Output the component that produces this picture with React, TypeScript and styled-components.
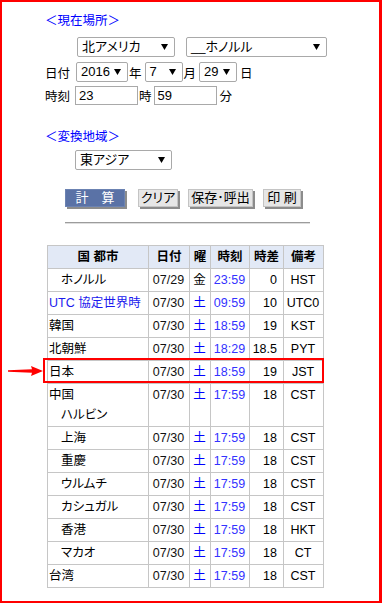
import React from "react";
import styled, { createGlobalStyle } from "styled-components";

const Global = createGlobalStyle`
  html, body { margin: 0; padding: 0; background: #fff; }
  body {
    font-family: "Liberation Sans", "Noto Sans CJK JP", sans-serif;
    font-size: 12.5px;
    color: #000;
    font-feature-settings: "palt";
  }
`;

const Frame = styled.div`
  box-sizing: border-box;
  width: 382px;
  height: 603px;
  border: 2px solid #f00;
  border-right-width: 3px;
  padding: 11px 0 0 43px;
  display: flex;
  flex-direction: column;
  align-items: flex-start;
`;

const Title = styled.div<{ $mt?: number }>`
  color: #0000ff;
  font-size: 12.5px;
  line-height: 16px;
  height: 16px;
  font-feature-settings: normal;
  margin-top: ${(p) => p.$mt ?? 0}px;
`;

const Row = styled.div<{ $mt: number; $pl?: number; $h: number; $gap?: number }>`
  display: flex;
  align-items: center;
  margin-top: ${(p) => p.$mt}px;
  padding-left: ${(p) => p.$pl ?? 0}px;
  height: ${(p) => p.$h}px;
  gap: ${(p) => p.$gap ?? 0}px;
`;

const SelectBox = styled.div<{ $w: number; $ml?: number }>`
  box-sizing: border-box;
  width: ${(p) => p.$w}px;
  height: 20px;
  margin-left: ${(p) => p.$ml ?? 0}px;
  border: 1px solid #a9a9a9;
  border-radius: 2px;
  background: #fff;
  display: flex;
  align-items: center;
  justify-content: space-between;
  padding: 0 6px 0 4px;
  font-size: 13px;
  line-height: 18px;
  white-space: nowrap;
`;

const Label = styled.span<{ $ml?: number; $mr?: number }>`
  font-size: 12.5px;
  margin-left: ${(p) => p.$ml ?? 0}px;
  margin-right: ${(p) => p.$mr ?? 0}px;
  white-space: nowrap;
`;

const TextInput = styled.div<{ $ml?: number }>`
  box-sizing: border-box;
  width: 63px;
  height: 19px;
  margin-left: ${(p) => p.$ml ?? 0}px;
  border: 1px solid #a9a9a9;
  padding-left: 3px;
  font-size: 13px;
  line-height: 17px;
  background: #fff;
`;

const Button = styled.div<{ $primary?: boolean; $w: number; $ml?: number }>`
  box-sizing: border-box;
  width: ${(p) => p.$w}px;
  height: 18px;
  margin-left: ${(p) => p.$ml ?? 0}px;
  background: ${(p) => (p.$primary ? "#5a72a6" : "#e6e6e6")};
  color: ${(p) => (p.$primary ? "#fff" : "#000")};
  border: 1px solid ${(p) => (p.$primary ? "#6b82b2" : "#c4c4c4")};
  box-shadow: 2px 2px 0 #8c8c8c;
  display: flex;
  align-items: center;
  justify-content: center;
  font-size: 13px;
  line-height: 16px;
  white-space: pre;
`;

const Rule = styled.div`
  margin-top: 15px;
  margin-left: 20px;
  width: 245px;
  border-top: 1px solid #9c9c9c;
  border-bottom: 1px solid #dedede;
`;

const TableWrap = styled.div`
  position: relative;
  margin-top: 21px;
  margin-left: 2px;
`;

const Table = styled.table`
  border-collapse: collapse;
  table-layout: fixed;
  width: 277px;
  font-size: 12.5px;
`;

const Th = styled.th`
  background: #e2e9f6;
  border: 1px solid #c6c6c6;
  font-weight: bold;
  line-height: 20px;
  padding: 1px 0;
  text-align: center;
  white-space: nowrap;
`;

const Td = styled.td<{
  $align?: "left" | "center" | "right";
  $indent?: boolean;
  $color?: string;
}>`
  border: 1px solid #c6c6c6;
  line-height: 20px;
  padding: 1px ${(p) => (p.$align === "right" ? 6 : 1)}px 1px
    ${(p) => (p.$indent ? 13 : p.$align === "left" ? 1 : 0)}px;
  text-align: ${(p) => p.$align ?? "center"};
  vertical-align: top;
  color: ${(p) => p.$color ?? "#000"};
  white-space: nowrap;
`;

const SubCity = styled.div`
  padding-left: 12px;
`;

const Highlight = styled.div`
  position: absolute;
  left: -4px;
  top: 113px;
  width: 281px;
  height: 25px;
  box-sizing: border-box;
  border: 2px solid #f00;
  pointer-events: none;
`;

const Arrow = styled.svg`
  position: absolute;
  left: -39px;
  top: 120px;
`;

const Tri = () => (
  <svg width="7" height="6" viewBox="0 0 7 6">
    <polygon points="0,0 7,0 3.5,6" fill="#000" />
  </svg>
);

const Select = ({ w, ml, children }: { w: number; ml?: number; children: React.ReactNode }) => (
  <SelectBox $w={w} $ml={ml}>
    <span>{children}</span>
    <Tri />
  </SelectBox>
);

type R = {
  city: string;
  sub?: string;
  indent?: boolean;
  cityBlue?: boolean;
  date: string;
  wd: string;
  wdBlue: boolean;
  time: string;
  diff: string;
  note: string;
};

const rows: R[] = [
  { city: "ホノルル", indent: true, date: "07/29", wd: "金", wdBlue: false, time: "23:59", diff: "0", note: "HST" },
  { city: "UTC 協定世界時", cityBlue: true, date: "07/30", wd: "土", wdBlue: true, time: "09:59", diff: "10", note: "UTC0" },
  { city: "韓国", date: "07/30", wd: "土", wdBlue: true, time: "18:59", diff: "19", note: "KST" },
  { city: "北朝鮮", date: "07/30", wd: "土", wdBlue: true, time: "18:29", diff: "18.5", note: "PYT" },
  { city: "日本", date: "07/30", wd: "土", wdBlue: true, time: "18:59", diff: "19", note: "JST" },
  { city: "中国", sub: "ハルビン", date: "07/30", wd: "土", wdBlue: true, time: "17:59", diff: "18", note: "CST" },
  { city: "上海", indent: true, date: "07/30", wd: "土", wdBlue: true, time: "17:59", diff: "18", note: "CST" },
  { city: "重慶", indent: true, date: "07/30", wd: "土", wdBlue: true, time: "17:59", diff: "18", note: "CST" },
  { city: "ウルムチ", indent: true, date: "07/30", wd: "土", wdBlue: true, time: "17:59", diff: "18", note: "CST" },
  { city: "カシュガル", indent: true, date: "07/30", wd: "土", wdBlue: true, time: "17:59", diff: "18", note: "CST" },
  { city: "香港", indent: true, date: "07/30", wd: "土", wdBlue: true, time: "17:59", diff: "18", note: "HKT" },
  { city: "マカオ", indent: true, date: "07/30", wd: "土", wdBlue: true, time: "17:59", diff: "18", note: "CT" },
  { city: "台湾", date: "07/30", wd: "土", wdBlue: true, time: "17:59", diff: "18", note: "CST" },
];

export default function App() {
  return (
    <>
      <Global />
      <Frame>
        <Title>＜現在場所＞</Title>
        <Row $mt={8} $pl={32} $h={20} $gap={11}>
          <Select w={98}>北アメリカ</Select>
          <Select w={141}>__ホノルル</Select>
        </Row>
        <Row $mt={5} $h={20}>
          <Label $mr={6}>日付</Label>
          <Select w={52}>2016</Select>
          <Label $ml={1}>年</Label>
          <Select w={38} ml={3}>7</Select>
          <Label $ml={1}>月</Label>
          <Select w={38} ml={3}>29</Select>
          <Label $ml={3}>日</Label>
        </Row>
        <Row $mt={4} $h={19}>
          <Label $mr={5}>時刻</Label>
          <TextInput>23</TextInput>
          <Label $ml={1}>時</Label>
          <TextInput $ml={2}>59</TextInput>
          <Label $ml={3}>分</Label>
        </Row>
        <Title $mt={24}>＜変換地域＞</Title>
        <Row $mt={5} $pl={30} $h={20}>
          <Select w={97}>東アジア</Select>
        </Row>
        <Row $mt={19} $pl={20} $h={18}>
          <Button $primary $w={60}>{"計　算"}</Button>
          <Button $w={40} $ml={13}>クリア</Button>
          <Button $w={65} $ml={10}>保存･呼出</Button>
          <Button $w={38} $ml={10}>{"印 刷"}</Button>
        </Row>
        <Rule />
        <TableWrap>
          <Table>
            <colgroup>
              <col style={{ width: 101 }} />
              <col style={{ width: 41 }} />
              <col style={{ width: 21 }} />
              <col style={{ width: 39 }} />
              <col style={{ width: 34 }} />
              <col style={{ width: 40 }} />
            </colgroup>
            <thead>
              <tr>
                <Th>国 都市</Th>
                <Th>日付</Th>
                <Th>曜</Th>
                <Th>時刻</Th>
                <Th>時差</Th>
                <Th>備考</Th>
              </tr>
            </thead>
            <tbody>
              {rows.map((r) => (
                <tr key={r.city}>
                  <Td $align="left" $indent={r.indent} $color={r.cityBlue ? "#1a1aee" : "#000"}>
                    {r.city}
                    {r.sub && <SubCity>{r.sub}</SubCity>}
                  </Td>
                  <Td $color="#111">{r.date}</Td>
                  <Td $color={r.wdBlue ? "#0000ff" : "#000"}>{r.wd}</Td>
                  <Td $color="#3333ff">{r.time}</Td>
                  <Td $align="right">{r.diff}</Td>
                  <Td>{r.note}</Td>
                </tr>
              ))}
            </tbody>
          </Table>
          <Highlight />
          <Arrow width="36" height="12" viewBox="0 0 36 12">
            <polygon points="0,5.3 24,4.3 23,1 35,6 23,11 24,7.7 0,6.7" fill="#f00" />
          </Arrow>
        </TableWrap>
      </Frame>
    </>
  );
}
